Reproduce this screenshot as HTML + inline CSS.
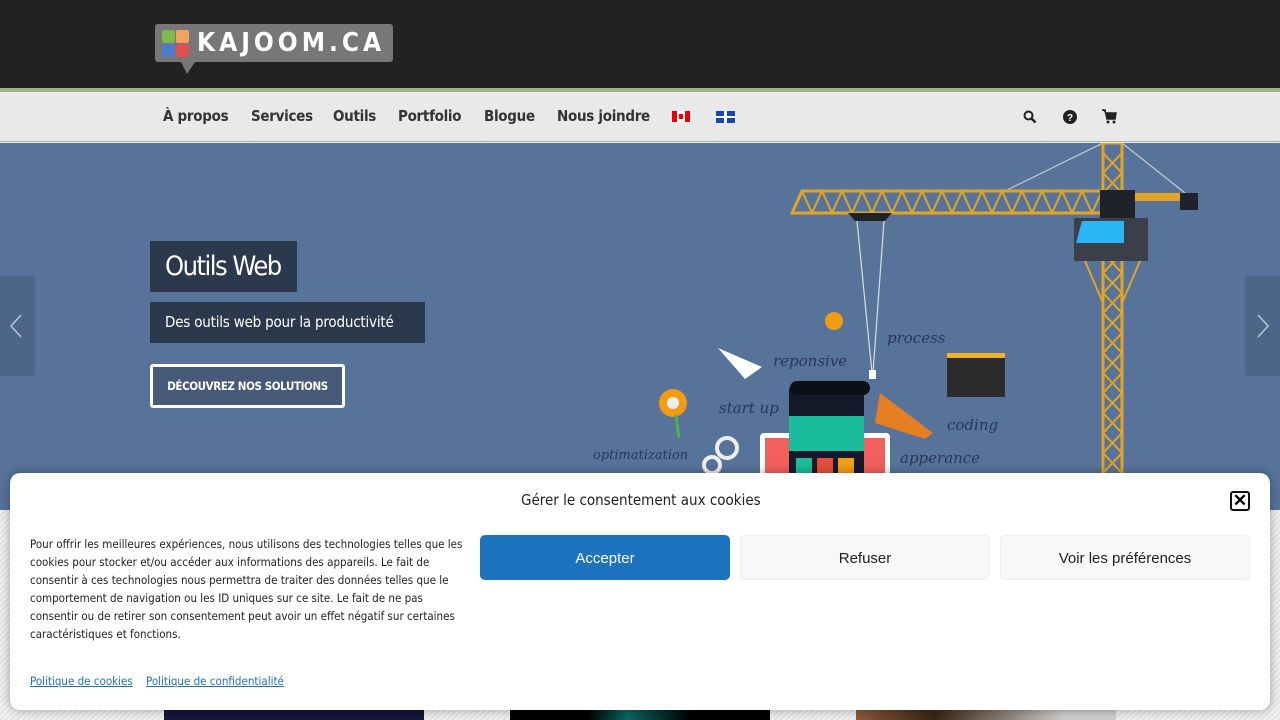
<!DOCTYPE html>
<html><head><meta charset="utf-8">
<style>
*{margin:0;padding:0;box-sizing:border-box}
body{width:1280px;height:720px;overflow:hidden;font-family:"DejaVu Sans","Liberation Sans",sans-serif;background:repeating-linear-gradient(135deg,#e4e4e4 0 2px,#f2f2f2 2px 4px);position:relative}
#top{position:absolute;left:0;top:0;width:1280px;height:88px;background:#222}
#gl{position:absolute;left:0;top:88px;width:1280px;height:4px;background:#9db389}
#nav{position:absolute;left:0;top:92px;width:1280px;height:50px;background:#e9e9e9;border-bottom:1px solid #a8b890}
#nav a{position:absolute;top:15px;font-family:"DejaVu Sans Condensed","DejaVu Sans",sans-serif;font-weight:bold;font-size:15px;color:#333;text-decoration:none;white-space:nowrap;letter-spacing:-0.3px}
#hero{position:absolute;left:0;top:143px;width:1280px;height:367px;background:#57739a;overflow:hidden}
.logo{position:absolute;left:155px;top:24px;width:238px;height:38px;background:#777;border-radius:3px}
.logo:after{content:"";position:absolute;left:26px;top:38px;border-left:6px solid transparent;border-right:8px solid transparent;border-top:12px solid #777}
.sq{position:absolute;width:13px;height:13px;border-radius:2px}
.logo span.t{position:absolute;left:42px;top:4px;color:#fff;font:bold 26px "DejaVu Sans Condensed","DejaVu Sans",sans-serif;letter-spacing:4px;white-space:nowrap}
#modal{position:absolute;left:10px;top:473px;width:1260px;height:237px;background:#fff;border-radius:10px;box-shadow:0 0 10px rgba(0,0,0,.35)}
.btn{position:absolute;top:62px;width:250px;height:45px;border-radius:5px;font:15px "Liberation Sans",sans-serif;text-align:center;line-height:45px;color:#222;background:#f8f8f8;border:1px solid #eee}
</style></head><body>
<div id="top"></div>
<div class="logo">
 <div class="sq" style="left:7px;top:6px;background:#7bbb4a"></div>
 <div class="sq" style="left:21px;top:6px;background:#f4a35f"></div>
 <div class="sq" style="left:7px;top:20px;background:#4b7dc9"></div>
 <div class="sq" style="left:21px;top:20px;background:#e05050"></div>
 <span class="t">KAJOOM.CA</span>
</div>
<div id="gl"></div>
<div id="nav">
 <a style="left:163px">À propos</a>
 <a style="left:251px">Services</a>
 <a style="left:333px">Outils</a>
 <a style="left:398px">Portfolio</a>
 <a style="left:484px">Blogue</a>
 <a style="left:557px">Nous joindre</a>
 <div style="position:absolute;left:672px;top:19px;width:18px;height:11px;background:linear-gradient(90deg,#e00 0 5px,#fff 5px 13px,#e00 13px)"><div style="position:absolute;left:7px;top:3px;width:4px;height:5px;background:#e00"></div></div>
 <div style="position:absolute;left:716px;top:19px;width:19px;height:12px;background:#1846b0"><div style="position:absolute;left:8px;top:0;width:3px;height:12px;background:#fff"></div><div style="position:absolute;left:0;top:5px;width:19px;height:2px;background:#fff"></div></div>
 <svg style="position:absolute;left:1023px;top:18px" width="14" height="14" viewBox="0 0 14 14"><circle cx="5.5" cy="5.5" r="4" fill="none" stroke="#222" stroke-width="2"/><path d="M8.5 8.5L12.5 12.5" stroke="#222" stroke-width="2.5"/></svg>
 <svg style="position:absolute;left:1063px;top:18px" width="14" height="14" viewBox="0 0 14 14"><circle cx="7" cy="7" r="7" fill="#222"/><text x="7" y="11" font-size="10" font-weight="bold" fill="#fff" text-anchor="middle" font-family="Liberation Sans">?</text></svg>
 <svg style="position:absolute;left:1102px;top:17px" width="15" height="15" viewBox="0 0 15 15"><path d="M0 1H3L5 10H13L14 4H4" fill="#222" stroke="#222" stroke-width="1.5"/><circle cx="6" cy="13" r="1.5" fill="#222"/><circle cx="12" cy="13" r="1.5" fill="#222"/></svg>
</div>
<div id="hero">
 <svg width="1280" height="367" style="position:absolute;left:0;top:0">
  <line x1="1005" y1="48" x2="1103" y2="0" stroke="#ccc" stroke-width="1.2"/>
  <line x1="1122" y1="0" x2="1185" y2="50" stroke="#ccc" stroke-width="1.2"/>
  <rect x="1103" y="0" width="19" height="367" fill="none" stroke="#e0a526" stroke-width="3"/>
  <path d="M1103 10 L1122 30 L1103 50 L1122 70 L1103 90 L1122 110 L1103 130 L1122 150 L1103 170 L1122 190 L1103 210 L1122 230 L1103 250 L1122 270 L1103 290 L1122 310 L1103 330 L1122 350 L1103 367" fill="none" stroke="#e0a526" stroke-width="2"/>
  <path d="M1122 10 L1103 30 L1122 50 L1103 70 L1122 90 L1103 110 L1122 130 L1103 150 L1122 170 L1103 190 L1122 210 L1103 230 L1122 250 L1103 270 L1122 290 L1103 310 L1122 330 L1103 350" fill="none" stroke="#e0a526" stroke-width="2"/>
  <path d="M802 48 L1105 48 L1105 70 L792 70 Z" fill="none" stroke="#e0a526" stroke-width="3"/>
  <path d="M802 48 L812 70 L822 48 L832 70 L842 48 L852 70 L862 48 L872 70 L882 48 L892 70 L902 48 L912 70 L922 48 L932 70 L942 48 L952 70 L962 48 L972 70 L982 48 L992 70 L1002 48 L1012 70 L1022 48 L1032 70 L1042 48 L1052 70 L1062 48 L1072 70 L1082 48 L1092 70 L1102 48" fill="none" stroke="#e0a526" stroke-width="2"/>
  <rect x="1100" y="47" width="35" height="30" fill="#1f2329"/>
  <rect x="1135" y="50" width="50" height="8" fill="#e0a526"/>
  <rect x="1180" y="50" width="18" height="17" fill="#1f2329"/>
  <rect x="1074" y="75" width="74" height="43" fill="#3a3f4a"/>
  <path d="M1082 78 L1124 78 L1124 100 L1076 100 Z" fill="#29b6f6"/>
  <path d="M1085 118 L1103 160 M1140 118 L1122 160" stroke="#e0a526" stroke-width="2"/>
  <path d="M848 70 L892 70 L885 78 L855 78 Z" fill="#1f2329"/>
  <path d="M857 78 L872 230 M884 78 L873 230" stroke="#ddd" stroke-width="1.2"/>
  <rect x="869" y="227" width="7" height="9" fill="#fff"/>
  <path d="M718 205 L762 224 L745 236 Z" fill="#fff"/>
  <circle cx="834" cy="178" r="9" fill="#f39c12"/>
  <circle cx="673" cy="260" r="14" fill="#f39c12"/><circle cx="673" cy="260" r="6" fill="#eee"/>
  <path d="M676 272 L679 295" stroke="#4caf50" stroke-width="3"/>
  <circle cx="727" cy="305" r="10" fill="none" stroke="#eee" stroke-width="4"/>
  <circle cx="712" cy="322" r="8" fill="none" stroke="#eee" stroke-width="4"/>
  <rect x="760" y="290" width="130" height="77" rx="4" fill="#fff"/>
  <rect x="765" y="295" width="120" height="72" fill="#f25f5c"/>
  <rect x="789" y="245" width="75" height="122" fill="#151a2b"/>
  <rect x="790" y="238" width="80" height="14" rx="7" fill="#0d0f18"/>
  <rect x="789" y="273" width="75" height="35" fill="#1abc9c"/>
  <rect x="796" y="315" width="16" height="15" fill="#1abc9c"/><rect x="817" y="315" width="16" height="15" fill="#e74c3c"/><rect x="838" y="315" width="16" height="15" fill="#f39c12"/>
  <path d="M880 250 L933 290 L925 296 L875 280 Z" fill="#e67e22"/>
  <rect x="947" y="210" width="58" height="44" fill="#2b2b2b"/><rect x="947" y="210" width="58" height="5" fill="#f0b429"/>
  <g font-family="DejaVu Serif,serif" font-style="italic" fill="#2a3556" font-size="15">
   <text x="887" y="200">process</text><text x="773" y="223">reponsive</text><text x="719" y="270">start up</text>
   <text x="947" y="287">coding</text><text x="593" y="316" font-size="13">optimatization</text><text x="900" y="320">apperance</text>
  </g>
 </svg>
 <div style="position:absolute;left:150px;top:98px;background:#2c384b;color:#fff;height:51px;width:147px;font:27px 'DejaVu Sans Condensed','DejaVu Sans',sans-serif;line-height:51px;padding-left:15px;letter-spacing:-1.5px;white-space:nowrap;overflow:hidden">Outils Web</div>
 <div style="position:absolute;left:150px;top:159px;background:#2c384b;color:#fff;height:41px;width:275px;font:15px 'DejaVu Sans Condensed','DejaVu Sans',sans-serif;line-height:40px;padding-left:15px;letter-spacing:-0.2px;white-space:nowrap;overflow:hidden">Des outils web pour la productivité</div>
 <div style="position:absolute;left:150px;top:221px;width:195px;height:44px;border:3px solid #fff;border-radius:3px;background:#475a78;color:#fff;font:bold 11.5px 'DejaVu Sans Condensed','DejaVu Sans',sans-serif;text-align:center;line-height:38px;letter-spacing:-0.4px;white-space:nowrap">DÉCOUVREZ NOS SOLUTIONS</div>
 <div style="position:absolute;left:0;top:133px;width:35px;height:100px;background:#4d6587;border-radius:0 3px 3px 0"></div>
 <div style="position:absolute;left:1245px;top:133px;width:35px;height:100px;background:#4d6587;border-radius:3px 0 0 3px"></div>
 <svg style="position:absolute;left:8px;top:170px" width="16" height="26"><path d="M13 2 L3 13 L13 24" fill="none" stroke="#bbc6d6" stroke-width="1.5"/></svg>
 <svg style="position:absolute;left:1255px;top:170px" width="16" height="26"><path d="M3 2 L13 13 L3 24" fill="none" stroke="#bbc6d6" stroke-width="1.5"/></svg>
</div>
<div style="position:absolute;left:164px;top:708px;width:260px;height:12px;background:#15163a"></div>
<div style="position:absolute;left:510px;top:708px;width:260px;height:12px;background:linear-gradient(90deg,#000 30%,#0d6660 45%,#000 70%)"></div>
<div style="position:absolute;left:856px;top:708px;width:260px;height:12px;background:linear-gradient(90deg,#8a5a3a,#3a2414 30%,#ccc 80%)"></div>
<div id="modal">
 <div style="position:absolute;left:511px;top:18px;font:15px 'DejaVu Sans Condensed','DejaVu Sans',sans-serif;color:#222">Gérer le consentement aux cookies</div>
 <div style="position:absolute;left:1220px;top:18px;width:20px;height:20px;border:2px solid #111;border-radius:3px;font:bold 17px 'Liberation Sans',sans-serif;line-height:16px;text-align:center">✕</div>
 <div style="position:absolute;left:20px;top:62px;width:440px;font:11.5px 'DejaVu Sans Condensed','DejaVu Sans',sans-serif;line-height:18px;color:#222">Pour offrir les meilleures expériences, nous utilisons des technologies telles que les cookies pour stocker et/ou accéder aux informations des appareils. Le fait de consentir à ces technologies nous permettra de traiter des données telles que le comportement de navigation ou les ID uniques sur ce site. Le fait de ne pas consentir ou de retirer son consentement peut avoir un effet négatif sur certaines caractéristiques et fonctions.</div>
 <div style="position:absolute;left:20px;top:201px;font:11.5px 'DejaVu Sans Condensed','DejaVu Sans',sans-serif;color:#1e73be;text-decoration:underline">Politique de cookies</div>
 <div style="position:absolute;left:136px;top:201px;font:11.5px 'DejaVu Sans Condensed','DejaVu Sans',sans-serif;color:#1e73be;text-decoration:underline">Politique de confidentialité</div>
 <div class="btn" style="left:470px;background:#1e73be;color:#fff;border-color:#1e73be">Accepter</div>
 <div class="btn" style="left:730px">Refuser</div>
 <div class="btn" style="left:990px">Voir les préférences</div>
</div>
</body></html>
